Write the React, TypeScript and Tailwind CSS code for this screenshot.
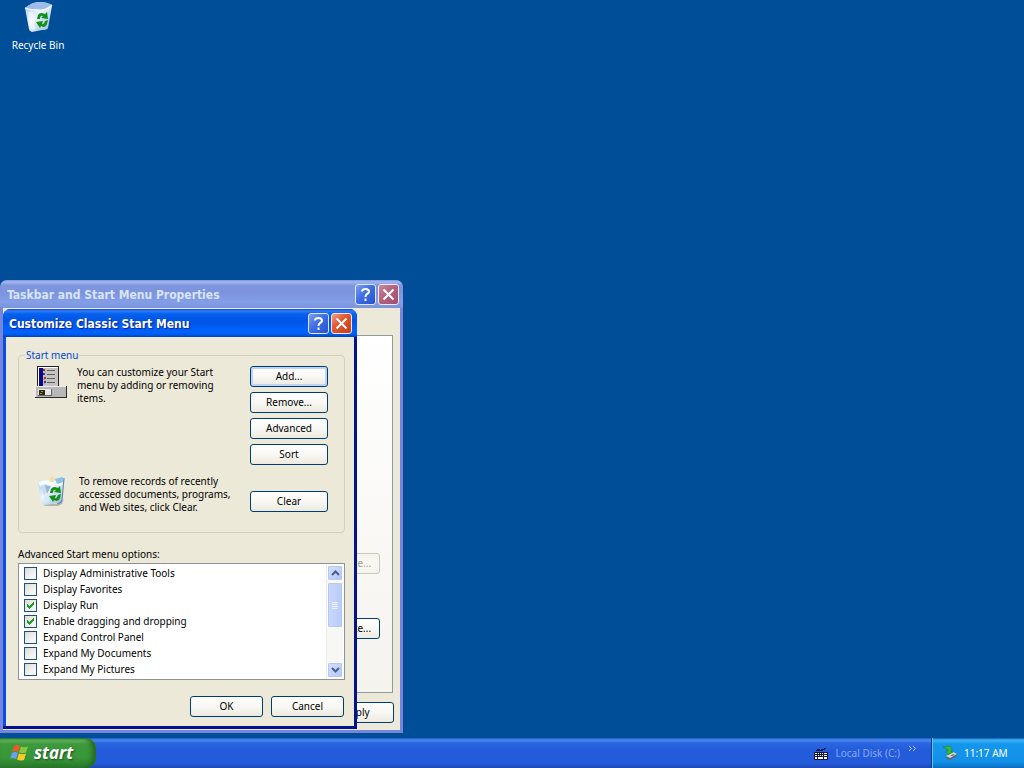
import type { ComponentProps, ReactNode } from "react";
import { useState } from "react";

const MENU_OPTIONS = [
  { id: "admin", label: "Display Administrative Tools", checked: false },
  { id: "favorites", label: "Display Favorites", checked: false },
  { id: "run", label: "Display Run", checked: true },
  { id: "drag", label: "Enable dragging and dropping", checked: true },
  { id: "control", label: "Expand Control Panel", checked: false },
  { id: "documents", label: "Expand My Documents", checked: false },
  { id: "pictures", label: "Expand My Pictures", checked: false },
];

function RecycleBinIcon({ full = false }: { full?: boolean }) {
  return (
    <svg width="32" height="32" viewBox="0 0 32 32" aria-hidden="true">
      <defs>
        <linearGradient id={full ? "binFull" : "binEmpty"} x1="0" y1="0" x2="1" y2="1">
          <stop offset="0" stopColor="#a9c9ef" />
          <stop offset="0.45" stopColor="#eaf4fd" />
          <stop offset="1" stopColor="#8fb6d8" />
        </linearGradient>
      </defs>
      {full ? (
        <>
          <path d="M7 28 L24 29 L29 24 L27 29 L23 31 L10 31 Z" fill="#8c968f" opacity="0.6" />
          <path d="M3 7 L29 3 L27 25 Q26 28 22 28 L10 30 Q7 29 6 26 Z" fill="url(#binFull)" />
          <path d="M3 7 L12 5 L19 6 L29 3 L28 10 L16 12 L5 11 Z" fill="#f4faff" />
          <path d="M14 4 L17 1 L20 3 L19 7 L15 7 Z" fill="#f3dfaa" />
          <path d="M20 4 L28 2 L28 7 L22 9 Z" fill="#8cc2e8" />
          <path d="M5 11 L11 9 L14 16 L9 20 Z" fill="#c6ddf0" />
          <path d="M10 10 L16 11 L12 19 Z" fill="#9fb5d6" />
          <path d="M9 21 L14 18 L14 26 L10 27 Z" fill="#d8e9f5" />
          <path d="M29 3 L27 25 Q26 28 22 29" fill="none" stroke="#5f8db1" strokeWidth="1.2" />
        </>
      ) : (
        <>
          <path d="M3 7 Q10 1 17 1 Q26 1 30 5 L26 27 Q25 29 20 29 L10 31 Q7 30 7 28 Z" fill="url(#binEmpty)" />
          <path d="M3 7 Q10 1 17 1 Q26 1 30 4 Q24 10 15 9 Q8 9 3 7 Z" fill="#9bbce8" />
          <path d="M3 7 Q8 9 15 9 Q24 10 30 4" fill="none" stroke="#f5faff" strokeWidth="1.3" />
          <path d="M6 11 L8 28 L13 29 L11 11 Z" fill="#ffffff" opacity="0.5" />
        </>
      )}
      <path d="M15 18 L16 14 Q17 12 20 12 L23 13 L25 11 L26 18 L19 17 L21 15 Q18 14 18 18 Z" fill="#12901a" />
      <path d="M26 19 L25 23 Q24 26 21 26 L19 25 L18 27 L14 21 L21 20 L20 23 Q22 24 23 20 Z" fill="#12901a" />
    </svg>
  );
}

function StartMenuIcon() {
  return (
    <svg width="32" height="32" viewBox="0 0 32 32" shapeRendering="crispEdges" aria-hidden="true">
      <path d="M2 0h22v22H2z" fill="#222222" />
      <path d="M3 1h20v21H3z" fill="#ffffff" />
      <path d="M4 2h19v20H4z" fill="#c3c3c3" />
      <path d="M4 2h4v19H4z" fill="#08088c" />
      <path d="M12 4h8v1h-8zM12 8h8v1h-8zM12 12h8v1h-8zM12 16h8v1h-8z" fill="#5e5e5e" />
      <path d="M8 3h2v2H8zM9 11h2v2H9z" fill="#c41d1d" />
      <path d="M8 7h2v2H8zM9 15h2v2H9z" fill="#3636b8" />
      <path d="M9 5h2v1H9zM8 13h2v1H8zM9 17h1v1H9z" fill="#c1ae24" />
      <path d="M0 20h32v12H0z" fill="#2b2b2b" />
      <path d="M0 20h31v11H0z" fill="#ededed" />
      <path d="M1 21h30v10H1z" fill="#b7b7b7" />
      <path d="M3 23h14v7H3z" fill="#666666" />
      <path d="M3 23h13v6H3z" fill="#e8e8e8" />
      <path d="M4 24h6v5H4z" fill="#292915" />
      <path d="M6 25h2v1H6zM5 27h2v1H5z" fill="#a8a12e" />
    </svg>
  );
}

function WindowsFlag() {
  return (
    <svg width="20" height="18" viewBox="0 0 20 18" aria-hidden="true">
      <path d="M4 2 Q7 0 10 2 L8 8 Q5 6 2 8 Z" fill="#f05a28" />
      <path d="M11 2.500 Q14 4 18 2.500 L16 8.500 Q13 10 9 8.500 Z" fill="#8bc63f" />
      <path d="M2 9 Q5 7 8 9 L6 15 Q3 13 0 15 Z" fill="#6a9ff5" />
      <path d="M9 9.500 Q12 11 16 9.500 L14 16 Q10 17 7 15.500 Z" fill="#fcc928" />
    </svg>
  );
}

function KeyboardIcon() {
  return (
    <svg width="14" height="13" viewBox="0 0 14 13" shapeRendering="crispEdges" aria-hidden="true">
      <path d="M2 3h1V2h3v1h1V2h3V1h2v1h-1v1H9v1H2z" fill="#10163c" />
      <path d="M0 5h14v8H0z" fill="#10163c" />
      <path
        d="M1 6h2v1H1zM4 6h1v1H4zM6 6h1v1H6zM8 6h1v1H8zM10 6h3v1h-3zM1 8h2v1H1zM4 8h1v1H4zM6 8h1v1H6zM8 8h1v1H8zM10 8h3v1h-3zM1 10h2v2H1zM4 10h5v2H4zM10 10h3v2h-3z"
        fill="#ffffff"
      />
    </svg>
  );
}

function SafelyRemoveIcon() {
  return (
    <svg width="16" height="16" viewBox="0 0 16 16" aria-hidden="true">
      <path d="M4 11 L11 7 L15 9 L15 11 L8 15 L4 13 Z" fill="#5c6670" />
      <path d="M4 11 L11 7 L15 9 L8 13 Z" fill="#d3d8d8" />
      <path d="M8 11 L11 9 L13 10 L10 11 Z" fill="#6b7780" />
      <path d="M1 2 L8 1 L10 3 L9 7 L11 7 L6 10 L4 6 L6 6 L5 4 Z" fill="#38b53c" stroke="#157d28" strokeWidth="0.5" />
    </svg>
  );
}

function PushButton({ children, className = "", ...rest }: ComponentProps<"button">) {
  return (
    <button
      type="button"
      className={`h-[21px] rounded-[3px] border border-[#003c74] bg-linear-to-b from-white via-[#f8f7f3] to-[#eceae0] text-center leading-[19px] disabled:border-[#c9c7ba] disabled:from-[#f5f4ea] disabled:to-[#f5f4ea] disabled:text-[#a1a192] ${className}`}
      {...rest}
    >
      {children}
    </button>
  );
}

function TitleBar({ title, active }: { title: string; active: boolean }) {
  const bar = active
    ? "bg-[linear-gradient(#0a4cd0_0,#2e7cf8_2px,#0560ee_5px,#0055e5_12px,#0062fb_21px,#0060f5_25px,#0040c0_28px)] text-white pl-[6px] pr-[5px]"
    : "bg-[linear-gradient(#7a96df_0,#a5b8f0_2px,#8097de_5px,#7c94de_12px,#839ee6_22px,#7b94dc_28px)] text-[#d8e4f8] pl-[7px] pr-1";
  const close = active
    ? "bg-[linear-gradient(135deg,#f0a088,#e25a34_40%,#c13f16)]"
    : "bg-[linear-gradient(135deg,#c48a9e,#b0607a_50%,#a05070)]";
  return (
    <header className={`flex h-7 items-center gap-0.5 rounded-t-[7px] ${bar}`}>
      <h2
        className={`flex-1 truncate pt-0.5 font-['DejaVu_Sans_Condensed','Noto_Sans',sans-serif] text-[12px] leading-[18px] font-bold ${active ? "[text-shadow:1px_1px_1px_#0a1e8c]" : ""}`}
      >
        {title}
      </h2>
      <button
        type="button"
        aria-label="Help"
        className="flex size-[21px] items-center justify-center rounded-[3px] border border-[#dfe7fb] bg-[linear-gradient(135deg,#7da0f2,#3f6fe4_45%,#2452cc)]"
      >
        <svg width="13" height="15" viewBox="0 0 13 15" fill="none" stroke="#ffffff" strokeWidth="2" aria-hidden="true">
          <path d="M3 4.500 Q3 2 6.500 2 Q10 2 10 4.500 Q10 6 8 7 Q6.500 8 6.500 10" />
          <path d="M6.500 11.500 V14" />
        </svg>
      </button>
      <button
        type="button"
        aria-label="Close"
        className={`flex size-[21px] items-center justify-center rounded-[3px] border border-[#f2e6ea] ${close}`}
      >
        <svg width="13" height="13" viewBox="0 0 13 13" stroke="#ffffff" strokeWidth="2" aria-hidden="true">
          <path d="M1.500 1.500 L11.500 11.500 M11.500 1.500 L1.500 11.500" />
        </svg>
      </button>
    </header>
  );
}

function ScrollButton({ direction }: { direction: "up" | "down" }) {
  return (
    <button
      type="button"
      aria-label={`Scroll ${direction}`}
      className="flex h-4 w-4 items-center justify-center rounded-[2px] border border-white bg-linear-to-br from-[#d5e0fd] to-[#b2c6f8] ring-1 ring-[#b4c8f6] ring-inset"
    >
      <svg width="9" height="6" viewBox="0 0 9 6" fill="none" stroke="#4d6185" strokeWidth="2" aria-hidden="true">
        <path d={direction === "up" ? "M1 5 L4.500 1.500 L8 5" : "M1 1 L4.500 4.500 L8 1"} />
      </svg>
    </button>
  );
}

function ScrollBar() {
  return (
    <div className="flex w-[17px] flex-col items-center border-l border-[#eeede5] bg-[#f7f7f3]">
      <ScrollButton direction="up" />
      <div className="mt-px flex h-[46px] w-4 flex-col items-center justify-center gap-px rounded-[2px] border border-white bg-linear-to-r from-[#cad8fc] to-[#b8caf8] ring-1 ring-[#b4c8f6] ring-inset">
        {[0, 1, 2, 3].map((n) => (
          <span key={n} className="h-px w-1.5 border-b border-[#eef4fe]" />
        ))}
      </div>
      <div className="flex-1" />
      <ScrollButton direction="down" />
    </div>
  );
}

function OptionList() {
  const [options, setOptions] = useState(MENU_OPTIONS);

  const toggle = (id: string) =>
    setOptions((prev) => prev.map((o) => (o.id === id ? { ...o, checked: !o.checked } : o)));

  return (
    <div className="flex border border-[#8b9299] bg-white p-px">
      <ul aria-labelledby="options-label" className="flex-1 pb-px">
        {options.map((option) => (
          <li key={option.id} className="h-4">
            <label className="flex h-4 items-center gap-1.5 pl-1">
              <span className="relative size-[13px]">
                <input
                  type="checkbox"
                  checked={option.checked}
                  onChange={() => toggle(option.id)}
                  className="peer block size-[13px] appearance-none border border-[#1c5180] bg-linear-to-br from-[#dcdcd7] to-white"
                />
                <svg
                  className="pointer-events-none absolute top-[3px] left-[3px] hidden peer-checked:block"
                  width="7"
                  height="7"
                  viewBox="0 0 7 7"
                  shapeRendering="crispEdges"
                  aria-hidden="true"
                >
                  <path d="M0 2h1v1h1v1h1V3h1V2h1V1h1V0h1v3H6v1H5v1H4v1H3v1H2V6H1V5H0z" fill="#21a121" />
                </svg>
              </span>
              {option.label}
            </label>
          </li>
        ))}
      </ul>
      <ScrollBar />
    </div>
  );
}

function PropertiesWindow() {
  return (
    <section className="absolute bottom-[5px] left-0 w-[403px] rounded-t-[8px] bg-[#7585dc]">
      <TitleBar title="Taskbar and Start Menu Properties" active={false} />
      <div className="mx-[3px] bg-[#ece9d8] pt-[27px] pb-[7px]">
        <div className="mx-[7px] flex flex-col items-end gap-11 border border-[#919b9c] bg-linear-to-b from-white to-[#f4f3ee] pt-[217px] pr-3 pb-[53px]">
          <PushButton disabled className="w-[75px]">
            Customize...
          </PushButton>
          <PushButton className="w-[75px]">Customize...</PushButton>
        </div>
        <div className="mt-[9px] flex justify-end pr-1.5">
          <PushButton className="w-[75px]">Apply</PushButton>
        </div>
      </div>
      <div className="h-[3px]" />
    </section>
  );
}

function GroupRow({ icon, text, children }: { icon: ReactNode; text: ReactNode; children: ReactNode }) {
  return (
    <div className="flex items-start">
      {icon}
      <div className="flex-1">{text}</div>
      <div className="flex w-[78px] flex-col gap-[5px]">{children}</div>
    </div>
  );
}

function CustomizeDialog() {
  return (
    <section className="absolute bottom-[9px] left-[3px] w-[354px] rounded-t-[8px] bg-linear-to-r from-[#0a4ee0] via-[#0831c4] to-[#00138c]">
      <TitleBar title="Customize Classic Start Menu" active />
      <div className="mx-[3px] bg-[#ece9d8] pt-3 pr-[9px] pb-[9px] pl-3">
        <fieldset className="rounded-[4px] border border-[#d0d0bf] pr-4 pb-[18px] pl-4">
          <legend className="-ml-2.5 px-px leading-[13px] text-[#0046d5]">Start menu</legend>
          <div className="pt-1">
            <GroupRow
              icon={<StartMenuIcon />}
              text={<p className="ml-2.5 max-w-[150px]">You can customize your Start menu by adding or removing items.</p>}
            >
              <PushButton className="shadow-[inset_0_0_0_2px_#bcd4f6]">Add...</PushButton>
              <PushButton>Remove...</PushButton>
              <PushButton>Advanced</PushButton>
              <PushButton>Sort</PushButton>
            </GroupRow>
          </div>
          <div className="pt-2.5">
            <GroupRow
              icon={<RecycleBinIcon full />}
              text={
                <p className="ml-3">
                  To remove records of recently accessed documents, programs, and Web sites, click Clear.
                </p>
              }
            >
              <PushButton className="mt-4">Clear</PushButton>
            </GroupRow>
          </div>
        </fieldset>
        <p id="options-label" className="mt-[15px] mb-0.5 leading-[13px]">
          Advanced Start menu options:
        </p>
        <OptionList />
        <div className="mt-4 flex justify-end gap-2 pr-px">
          <PushButton className="w-[73px]">OK</PushButton>
          <PushButton className="w-[73px]">Cancel</PushButton>
        </div>
      </div>
      <div className="h-[3px] bg-[#00138c]" />
    </section>
  );
}

function Taskbar() {
  return (
    <footer className="flex h-[30px] items-stretch bg-[linear-gradient(#1f52c4_0,#4a8cf0_2px,#2a66e2_5px,#245bdb_12px,#245bdb_25px,#1c48b4_30px)] text-white">
      <button
        type="button"
        className="flex w-24 items-center gap-1 rounded-r-[10px] bg-[linear-gradient(#2b7a2b_0,#6cbb68_2px,#3c9a3c_6px,#379637_20px,#2b7a2b_30px)] pl-2.5 shadow-[inset_-4px_0_5px_#246a24]"
      >
        <WindowsFlag />
        <span className="font-['Open_Sans','Noto_Sans',sans-serif] text-[17px] leading-5 font-bold italic [text-shadow:1px_1px_2px_#1b4d1b]">
          start
        </span>
      </button>
      <div className="flex flex-1 items-center justify-end pr-3.5">
        <KeyboardIcon />
        <button type="button" className="ml-2 text-[#86abf5]">
          Local Disk (C:)
        </button>
        <button type="button" aria-label="More toolbars" className="mb-2.5 ml-2">
          <svg width="9" height="7" viewBox="0 0 9 7" fill="none" stroke="#b4d0ff" aria-hidden="true">
            <path d="M1 1 L3.500 3.500 L1 6 M5 1 L7.500 3.500 L5 6" />
          </svg>
        </button>
      </div>
      <div className="flex w-[93px] items-center gap-1.5 border-l border-[#0a3d8c] bg-[linear-gradient(#0c59b9_0,#3fb5f5_2px,#1596ec_6px,#1290e8_24px,#0c6cc0_30px)] pl-2.5 shadow-[inset_1px_0_0_#5cc8fa]">
        <SafelyRemoveIcon />
        <time>11:17 AM</time>
      </div>
    </footer>
  );
}

export default function App() {
  return (
    <div className="flex min-h-screen flex-col bg-[#004e98] font-['Noto_Sans','Open_Sans',sans-serif] text-[10px] leading-[13px] text-black">
      <main className="relative flex-1">
        <a href="#recycle-bin" className="flex w-[76px] flex-col items-center gap-1.5 pt-px text-white">
          <RecycleBinIcon />
          <span>Recycle Bin</span>
        </a>
        <PropertiesWindow />
        <CustomizeDialog />
      </main>
      <Taskbar />
    </div>
  );
}
